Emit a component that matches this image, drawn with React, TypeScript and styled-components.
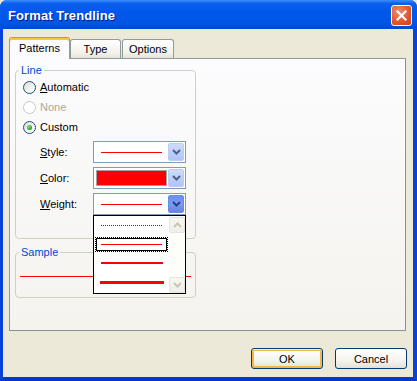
import React from "react";
import styled, { createGlobalStyle, css } from "styled-components";

const GlobalStyle = createGlobalStyle`
  html, body {
    margin: 0;
    padding: 0;
    background: #ece9d8;
  }
  body {
    font-family: "Liberation Sans", Arial, sans-serif;
    font-size: 11px;
    color: #000;
  }
`;

const Window = styled.div`
  width: 417px;
  height: 381px;
  display: flex;
  flex-direction: column;
  background: #0055e5;
  border-radius: 7px 7px 0 0;
  overflow: hidden;
`;

const TitleBar = styled.div`
  height: 29px;
  box-sizing: border-box;
  padding: 2px 5px 0 8px;
  display: flex;
  align-items: center;
  justify-content: space-between;
  background: linear-gradient(
    to bottom,
    #3c8ffb 0%,
    #0b5fed 12%,
    #0058ea 40%,
    #0055e5 80%,
    #0046d8 100%
  );
`;

const Title = styled.span`
  color: #fff;
  font-weight: bold;
  font-size: 13px;
  text-shadow: 1px 1px 0 #0a1883;
  letter-spacing: 0.1px;
`;

const CloseButton = styled.div`
  width: 21px;
  height: 21px;
  box-sizing: border-box;
  border: 1px solid #fff;
  border-radius: 3px;
  background: radial-gradient(circle at 35% 30%, #ec8d6d 0%, #e2582f 55%, #c8411c 100%);
  display: flex;
  align-items: center;
  justify-content: center;
`;

const Frame = styled.div`
  flex: 1;
  display: flex;
  border-left: 3px solid #0842d9;
  border-right: 4px solid #0842d9;
  border-bottom: 4px solid #0537c9;
`;

const Client = styled.div`
  flex: 1;
  display: flex;
  flex-direction: column;
  background: #ece9d8;
  padding: 8px 7px 8px 6px;
`;

const TabRow = styled.div`
  height: 22px;
  margin-bottom: -1px;
  display: flex;
  align-items: flex-end;
  position: relative;
  z-index: 1;
`;

const Tab = styled.div<{ $active?: boolean; $width: number; $gap?: number }>`
  width: ${(p) => p.$width}px;
  margin-left: ${(p) => p.$gap ?? 0}px;
  box-sizing: border-box;
  display: flex;
  align-items: center;
  justify-content: center;
  border: 1px solid #919b9c;
  border-bottom: none;
  border-radius: 3px 3px 0 0;
  ${(p) =>
    p.$active
      ? css`
          height: 22px;
          padding-bottom: 2px;
          background: #fcfcfe;
          border-top: 1px solid #e68b2c;
          box-shadow: inset 0 2px 0 #ffc73c;
        `
      : css`
          height: 19px;
          margin-bottom: 1px;
          background: linear-gradient(to bottom, #ffffff, #f3f2ec 70%, #e5e3d9);
        `}
`;

const Panel = styled.div`
  height: 273px;
  box-sizing: border-box;
  border: 1px solid #919b9c;
  border-right-color: #8a9394;
  border-bottom-color: #8a9394;
  background: linear-gradient(to bottom, #fcfcfe, #f4f3ee);
  padding: 0 0 0 5px;
`;

const GroupBox = styled.fieldset<{ $padLeft: number; $padBottom: number; $top: number }>`
  margin: ${(p) => p.$top}px 0 0 0;
  width: 181px;
  box-sizing: border-box;
  border: 1px solid #d0d0bf;
  border-radius: 4px;
  padding: 0 5px ${(p) => p.$padBottom}px ${(p) => p.$padLeft}px;
  min-inline-size: 0;
`;

const Legend = styled.legend<{ $shift: number }>`
  padding: 0 2px;
  margin-left: ${(p) => p.$shift}px;
  color: #0046d5;
  line-height: 13px;
  font-size: 11px;
`;

const RadioRow = styled.div<{ $disabled?: boolean }>`
  height: 20px;
  display: flex;
  align-items: center;
  gap: 4px;
  color: ${(p) => (p.$disabled ? "#aca899" : "#000")};
`;

const RadioCircle = styled.span<{ $checked?: boolean; $disabled?: boolean }>`
  width: 13px;
  height: 13px;
  box-sizing: border-box;
  border-radius: 50%;
  border: 1px solid ${(p) => (p.$disabled ? "#cac8bb" : "#1c5180")};
  background: ${(p) =>
    p.$disabled ? "#fff" : "linear-gradient(135deg, #dcdbd5 0%, #f4f4f1 60%, #ffffff 100%)"};
  display: flex;
  align-items: center;
  justify-content: center;
  &::after {
    content: "";
    display: ${(p) => (p.$checked ? "block" : "none")};
    width: 5px;
    height: 5px;
    border-radius: 50%;
    background: radial-gradient(circle at 35% 35%, #7de17d 0%, #21a121 70%, #1a8a1a 100%);
  }
`;

const ComboRow = styled.div<{ $first?: boolean }>`
  height: 22px;
  margin-top: ${(p) => (p.$first ? 4 : 4)}px;
  padding-left: 17px;
  display: flex;
  align-items: center;
`;

const ComboLabel = styled.span`
  width: 53px;
`;

const Combo = styled.div`
  position: relative;
  width: 93px;
  height: 22px;
  box-sizing: border-box;
  border: 1px solid #7f9db9;
  background: #fff;
  display: flex;
  align-items: center;
`;

const ComboValue = styled.div`
  flex: 1;
  height: 100%;
  display: flex;
  align-items: center;
`;

const DropButton = styled.div<{ $pressed?: boolean }>`
  width: 16px;
  height: 18px;
  margin: 1px 1px 1px 0;
  box-sizing: border-box;
  border-radius: 2px;
  display: flex;
  align-items: center;
  justify-content: center;
  ${(p) =>
    p.$pressed
      ? css`
          border: 1px solid #6d8ae0;
          background: linear-gradient(to bottom, #6f8ff0, #7b9af5 50%, #6482ea);
        `
      : css`
          border: 1px solid #bccbf2;
          background: linear-gradient(to bottom, #cfdcfc, #bccffb 50%, #b0c4f6);
        `}
`;

const LineSample = styled.div<{ $weight: number; $dotted?: boolean; $width: number; $left: number }>`
  width: ${(p) => p.$width}px;
  margin-left: ${(p) => p.$left}px;
  height: 0;
  border-top: ${(p) => p.$weight}px ${(p) => (p.$dotted ? "dotted #c00000" : "solid #ff0000")};
`;

const ColorSwatch = styled.div`
  width: 71px;
  height: 16px;
  margin-left: 2px;
  box-sizing: border-box;
  border: 1px solid #a3a3a3;
  background: #ff0000;
`;

const DropList = styled.div`
  position: absolute;
  top: 21px;
  left: -1px;
  width: 93px;
  height: 79px;
  box-sizing: border-box;
  border: 1px solid #000;
  background: #fff;
  display: flex;
  z-index: 2;
`;

const ListItems = styled.div`
  flex: 1;
  display: flex;
  flex-direction: column;
`;

const ListItem = styled.div`
  height: 19px;
  display: flex;
  align-items: center;
  padding-left: 1px;
`;

const FocusBox = styled.div<{ $focused?: boolean }>`
  width: 73px;
  height: 15px;
  box-sizing: border-box;
  display: flex;
  align-items: center;
  margin-top: -1px;
  border: 1px ${(p) => (p.$focused ? "dotted #000" : "solid transparent")};
  box-shadow: ${(p) => (p.$focused ? "inset 0 0 0 1px #000" : "none")};
`;

const ScrollTrack = styled.div`
  width: 16px;
  background: #fdfdfa;
  display: flex;
  flex-direction: column;
  justify-content: space-between;
  padding: 1px 0 0;
`;

const ScrollButton = styled.div`
  width: 16px;
  height: 16px;
  box-sizing: border-box;
  border: 1px solid #e6e4dc;
  border-radius: 2px;
  background: linear-gradient(to bottom, #f7f6f1, #efeee8);
  display: flex;
  align-items: center;
  justify-content: center;
`;

const SampleLine = styled.div`
  margin-top: 17px;
  width: 171px;
  height: 1px;
  background: #ff0000;
`;

const ButtonRow = styled.div`
  margin-top: 17px;
  margin-right: -1px;
  display: flex;
  justify-content: flex-end;
  gap: 12px;
`;

const PushButton = styled.div<{ $default?: boolean }>`
  width: 72px;
  height: 21px;
  box-sizing: border-box;
  border: 1px solid #003c74;
  border-radius: 3px;
  background: linear-gradient(to bottom, #ffffff 0%, #f5f4ef 60%, #e3e0d6 100%);
  display: flex;
  align-items: center;
  justify-content: center;
  ${(p) =>
    p.$default &&
    css`
      box-shadow: inset 0 1px 0 #ffefc4, inset 0 0 0 2px #f5b547;
    `}
`;

const Chevron = ({ dir = "down", color }: { dir?: "up" | "down"; color: string }) => (
  <svg width="9" height="6" viewBox="0 0 9 6">
    <polyline
      points={dir === "down" ? "1,1 4.5,4.5 8,1" : "1,5 4.5,1.5 8,5"}
      fill="none"
      stroke={color}
      strokeWidth="2"
    />
  </svg>
);

const CloseIcon = () => (
  <svg width="11" height="11" viewBox="0 0 11 11">
    <path d="M1.5 1.5 L9.5 9.5 M9.5 1.5 L1.5 9.5" stroke="#fff" strokeWidth="2.2" strokeLinecap="square" />
  </svg>
);

export default function App() {
  return (
    <>
      <GlobalStyle />
      <Window>
        <TitleBar>
          <Title>Format Trendline</Title>
          <CloseButton>
            <CloseIcon />
          </CloseButton>
        </TitleBar>
        <Frame>
          <Client>
            <TabRow>
              <Tab $active $width={61}>Patterns</Tab>
              <Tab $width={51}>Type</Tab>
              <Tab $width={52} $gap={1}>Options</Tab>
            </TabRow>
            <Panel>
              <GroupBox $top={5} $padLeft={7} $padBottom={23}>
                <Legend $shift={-4}>Line</Legend>
                <RadioRow>
                  <RadioCircle />
                  <span>
                    <u>A</u>utomatic
                  </span>
                </RadioRow>
                <RadioRow $disabled>
                  <RadioCircle $disabled />
                  <span>None</span>
                </RadioRow>
                <RadioRow>
                  <RadioCircle $checked />
                  <span>Custom</span>
                </RadioRow>
                <ComboRow $first>
                  <ComboLabel>
                    <u>S</u>tyle:
                  </ComboLabel>
                  <Combo>
                    <ComboValue>
                      <LineSample $weight={1} $width={61} $left={7} />
                    </ComboValue>
                    <DropButton>
                      <Chevron color="#4d6185" />
                    </DropButton>
                  </Combo>
                </ComboRow>
                <ComboRow>
                  <ComboLabel>
                    <u>C</u>olor:
                  </ComboLabel>
                  <Combo>
                    <ComboValue>
                      <ColorSwatch />
                    </ComboValue>
                    <DropButton>
                      <Chevron color="#4d6185" />
                    </DropButton>
                  </Combo>
                </ComboRow>
                <ComboRow>
                  <ComboLabel>
                    <u>W</u>eight:
                  </ComboLabel>
                  <Combo>
                    <ComboValue>
                      <LineSample $weight={1} $width={61} $left={7} />
                    </ComboValue>
                    <DropButton $pressed>
                      <Chevron color="#2f4275" />
                    </DropButton>
                    <DropList>
                      <ListItems>
                        <ListItem>
                          <FocusBox>
                            <LineSample $weight={1} $dotted $width={61} $left={5} />
                          </FocusBox>
                        </ListItem>
                        <ListItem>
                          <FocusBox $focused>
                            <LineSample $weight={1} $width={61} $left={5} />
                          </FocusBox>
                        </ListItem>
                        <ListItem>
                          <FocusBox>
                            <LineSample $weight={2} $width={62} $left={5} />
                          </FocusBox>
                        </ListItem>
                        <ListItem>
                          <FocusBox>
                            <LineSample $weight={3} $width={64} $left={4} />
                          </FocusBox>
                        </ListItem>
                      </ListItems>
                      <ScrollTrack>
                        <ScrollButton>
                          <Chevron dir="up" color="#c9c6b6" />
                        </ScrollButton>
                        <ScrollButton>
                          <Chevron color="#c9c6b6" />
                        </ScrollButton>
                      </ScrollTrack>
                    </DropList>
                  </Combo>
                </ComboRow>
              </GroupBox>
              <GroupBox $top={7} $padLeft={4} $padBottom={20}>
                <Legend $shift={-1}>Sample</Legend>
                <SampleLine />
              </GroupBox>
            </Panel>
            <ButtonRow>
              <PushButton $default>OK</PushButton>
              <PushButton>Cancel</PushButton>
            </ButtonRow>
          </Client>
        </Frame>
      </Window>
    </>
  );
}
